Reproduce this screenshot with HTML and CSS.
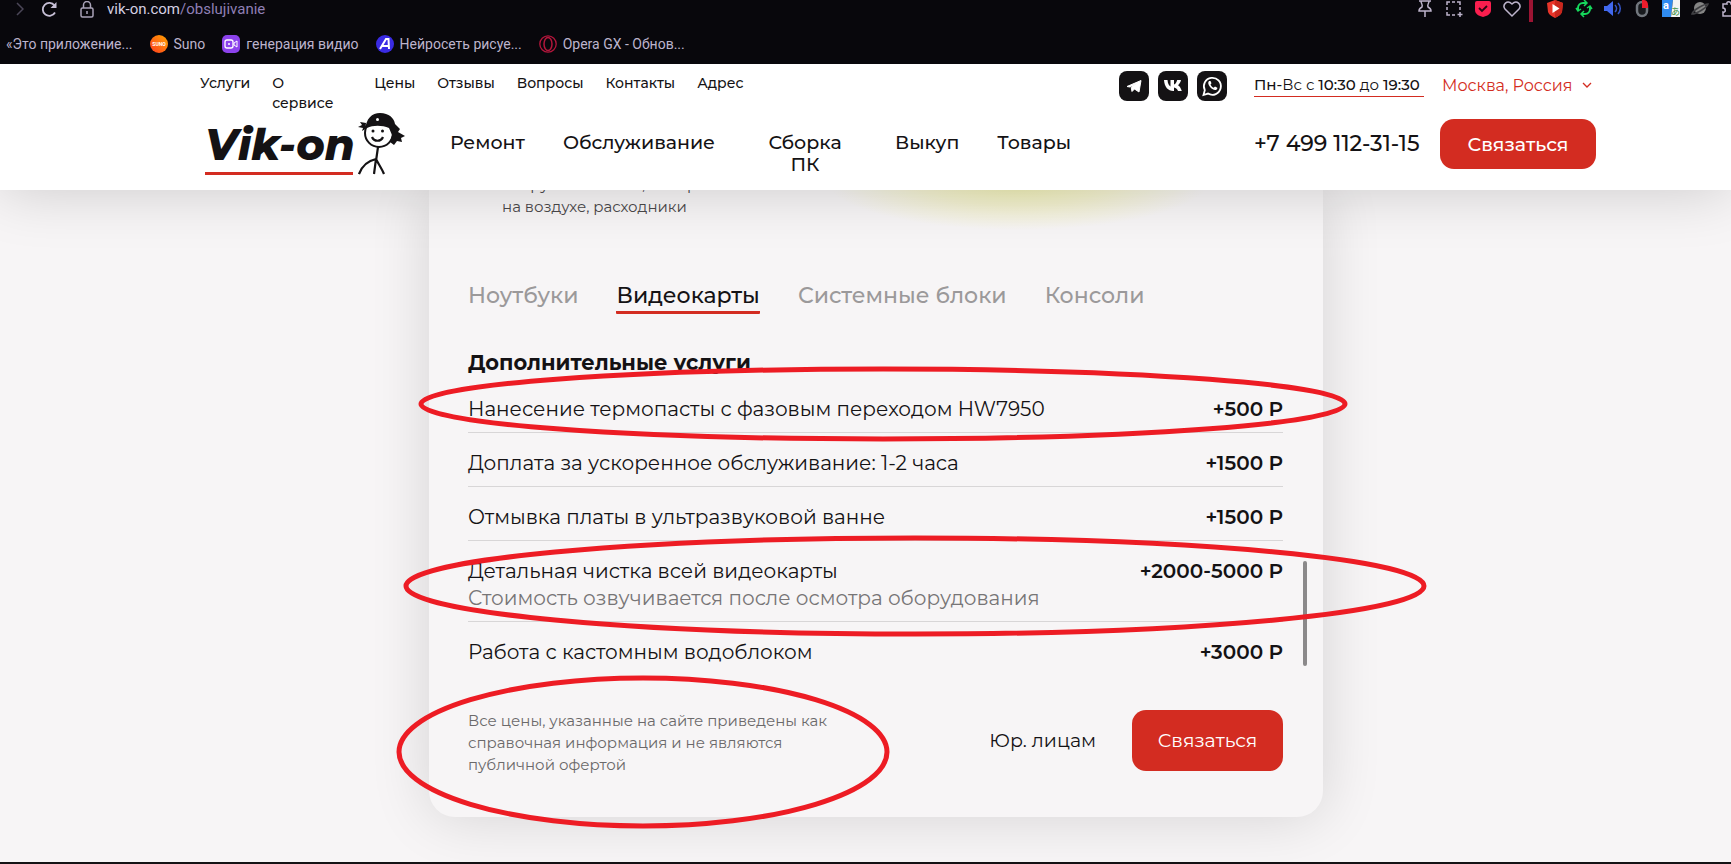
FILE: index.html
```html
<!DOCTYPE html>
<html lang="ru">
<head>
    <meta charset="UTF-8">
    <meta name="viewport" content="width=device-width, initial-scale=1.0">
    <title>Vik-on — Обслуживание</title>
    <link rel="stylesheet" href="styles.css">
</head>
<body>
    <div class="browser">
        <div class="toolbar">
            <div class="toolbar-left">
                <svg class="forward" width="8" height="14" viewBox="0 0 8 14"><path d="M1 1l6 6-6 6" fill="none" stroke="#4b4658" stroke-width="1.5"/></svg>
                <svg class="reload" width="17" height="17" viewBox="0 0 17 17"><path d="M14 11.5A6.500 6.500 0 1 1 13.500 4.500" fill="none" stroke="#c6bfd6" stroke-width="1.8"/><path d="M15.500 1v6H9.500z" fill="#c6bfd6"/></svg>
                <svg class="lock" width="14" height="17" viewBox="0 0 14 17"><path d="M3.500 7V4a3.500 3.500 0 0 1 7 0v3" fill="none" stroke="#a9a3b8" stroke-width="1.5"/><rect x="1" y="7" width="12" height="9" rx="1.500" fill="none" stroke="#a9a3b8" stroke-width="1.500"/><path d="M7 10v3" stroke="#a9a3b8" stroke-width="1.500"/></svg>
                <span class="address">vik-on.com<span class="path">/obslujivanie</span></span>
            </div>
            <div class="extensions">
                <svg width="18" height="18" viewBox="0 0 18 18" fill="none" stroke="#bdb4cc" stroke-width="1.500"><path d="M3 1h12M5 1c0 3 2 3 1 6-2 1-3 2-3 4h12c0-2-1-3-3-4-1-3 1-3 1-6M9 11v6"/></svg>
                <svg width="18" height="18" viewBox="0 0 18 18" fill="none" stroke="#bdb4cc" stroke-width="1.500"><path d="M2 5V2h3M7 2h3M12 2h3v3M15 7v3M2 7v3M2 12v3h3M7 15h3M15 12v5M12.500 14.500h5"/></svg>
                <svg width="18" height="18" viewBox="0 0 18 18"><path d="M1 3a2 2 0 0 1 2-2h12a2 2 0 0 1 2 2v7c0 4-4 6-8 7-4-1-8-3-8-7z" fill="#fa1e4e"/><path d="M5 8l3 3 5-5" fill="none" stroke="#2a0612" stroke-width="1.800"/></svg>
                <svg width="18" height="18" viewBox="0 0 18 18"><path d="M9 16L2 9C-1 5 4-1 9 4c5-5 10 1 7 5z" fill="none" stroke="#bdb4cc" stroke-width="1.500"/></svg>
                <span class="divider"></span>
                <svg width="18" height="18" viewBox="0 0 18 18"><path d="M9 0l8 3-1 9c-1 3-4 4-7 6-3-2-6-3-7-6L1 3z" fill="#e8352a"/><path d="M9 0l8 3-1 9c-1 3-4 4-7 6z" fill="#c9271d"/><path d="M6.500 4l7 4.500-7 4.500z" fill="#fff"/></svg>
                <svg width="18" height="18" viewBox="0 0 18 18" fill="none" stroke="#16d85c" stroke-width="2"><path d="M3 10V8a5 5 0 0 1 5-5h3M15 7v2a5 5 0 0 1-5 5H7"/><path d="M9 0l3 3-3 3M9 11l-3 3 3 3M1 8l2 3 3-2M17 9l-2-3-3 2" stroke-width="1.500"/></svg>
                <svg width="18" height="18" viewBox="0 0 18 18"><path d="M0 6h3l6-5v15l-6-5H0z" fill="#4168ee"/><path d="M11 5c2 2 2 5 0 7M14 3c3 3 3 8 0 11" fill="none" stroke="#3454c4" stroke-width="1.600"/></svg>
                <svg width="18" height="18" viewBox="0 0 18 18"><rect x="4" y="2" width="10" height="14" rx="5" fill="#17191d" stroke="#72777e" stroke-width="2.500"/><path d="M9 8V0h2c3 0 4 3 4 5v3z" fill="#ed1c2c"/></svg>
                <svg width="18" height="18" viewBox="0 0 18 18"><path d="M0 0h11l-2 17H0z" fill="#2f8bf0"/><path d="M11 0h7v17H9z" fill="#f4f4f4"/><text x="1" y="9" class="glyph" fill="#fff">a</text><text x="9" y="15" class="glyph-jp" fill="#2e8b37">あ</text></svg>
                <svg width="18" height="18" viewBox="0 0 18 18"><circle cx="9" cy="8" r="6" fill="#858585"/><path d="M1 14C2 10 13 4 17 4 16 8 5 14 1 14z" fill="none" stroke="#3f3f43" stroke-width="1.500"/></svg>
                <svg width="18" height="18" viewBox="0 0 18 18"><path d="M3 4h4c-1-3 4-3 4 0h5v12H3v-4c3 1 3-4 0-4z" fill="none" stroke="#bdb4cc" stroke-width="1.500"/></svg>
            </div>
        </div>
        <nav class="bookmarks">
            <a href="#">«Это приложение...</a>
            <a href="#"><svg width="18" height="18" viewBox="0 0 18 18"><defs><linearGradient id="suno" x1="0" y1="1" x2="1" y2="0"><stop offset="0" stop-color="#ff3b1f"/><stop offset="1" stop-color="#ffa400"/></linearGradient></defs><circle cx="9" cy="9" r="9" fill="url(#suno)"/><text x="9" y="11" class="suno-mark" text-anchor="middle" fill="#fff">SUNO</text></svg>Suno</a>
            <a href="#"><svg width="18" height="18" viewBox="0 0 18 18"><rect width="18" height="18" rx="5" fill="#8c42ec"/><rect x="3" y="5" width="8" height="8" rx="2" fill="none" stroke="#fff" stroke-width="1.300"/><path d="M12 8l3-2v6l-3-2z" fill="none" stroke="#fff"/><circle cx="7" cy="9" r="1" fill="#fff"/></svg>генерация видио</a>
            <a href="#"><svg width="18" height="18" viewBox="0 0 18 18"><circle cx="9" cy="9" r="9" fill="#3a2be4"/><path d="M4 14L10 4h2.500l.5 10M6.500 11H13" fill="none" stroke="#fff" stroke-width="2"/></svg>Нейросеть рисуе...</a>
            <a href="#"><svg width="18" height="18" viewBox="0 0 18 18" fill="none" stroke="#b3163c"><circle cx="9" cy="9" r="8.200" stroke-width="1.300"/><ellipse cx="9" cy="9" rx="4" ry="6.500" stroke-width="1.500"/></svg>Opera GX - Обнов...</a>
        </nav>
    </div>

    <header class="header">
        <div class="header-top">
            <nav class="top-nav">
                <a href="#">Услуги</a>
                <a href="#" class="two-lines">О сервисе</a>
                <a href="#">Цены</a>
                <a href="#">Отзывы</a>
                <a href="#">Вопросы</a>
                <a href="#">Контакты</a>
                <a href="#">Адрес</a>
            </nav>
            <div class="socials">
                <a href="#" aria-label="Telegram"><svg width="30" height="30" viewBox="0 0 30 30"><path d="M8 15.500L22 9.500 20 21l-4.500-3-2.500 2.500-.8-4 5.500-4.500-6.700 4z" fill="#fff" stroke="#fff" stroke-linejoin="round"/></svg></a>
                <a href="#" aria-label="ВКонтакте"><svg width="30" height="30" viewBox="0 0 30 30"><path d="M6 9h3.500c.3 4 1.800 6 3 6.500V9H16v4.500c1.500-.2 2.600-2.300 3.200-4.500H23c-.5 2.400-1.700 4.200-3 5.200 1.500.9 2.800 2.600 3.800 5.800H20c-.5-1.900-2-3.300-4-3.600V20h-.6C10 20 6.500 16 6 9z" fill="#fff"/></svg></a>
                <a href="#" aria-label="WhatsApp"><svg width="30" height="30" viewBox="0 0 30 30"><path d="M6.500 24l1.300-4.800A8.500 8.500 0 1 1 11 22.600z" fill="none" stroke="#fff" stroke-width="1.800"/><path d="M12 10c-3 3 3.500 10 7 9 1-.5 1.500-1.500 1.300-2.300L18 15.500l-1.300 1.300c-1.500-.6-2.600-1.700-3.200-3.200l1-1.300-1-2.300z" fill="#fff"/></svg></a>
            </div>
            <a href="#" class="hours"><b>Пн-</b>Вс с <b>10:30</b> до <b>19:30</b></a>
            <button class="city" type="button">Москва, Россия
                <svg width="10" height="6" viewBox="0 0 10 6"><path d="M1 1l4 4 4-4" fill="none" stroke="#d32c21" stroke-width="1.300"/></svg>
            </button>
        </div>
        <div class="header-main">
            <a href="#" class="logo">
                <span class="logo-text">Vik-on</span>
                <svg class="logo-man" width="48" height="62" viewBox="0 0 48 62">
                    <circle cx="21" cy="20" r="14" fill="#fff" stroke="#141214" stroke-width="2"/>
                    <path d="M7 18C8 5 14 0 22 0c9 0 14 5 15 11l5 5-2 3 7 4-4 2 1 4-5-1-3 4-4-3 2-7-3-7C24 12 15 12 9 15l-5 3 1-3-5-1 4-2-2-3 6 1z" fill="#141214"/>
                    <circle cx="19.500" cy="6.500" r="1.500" fill="#fff"/>
                    <circle cx="15" cy="18" r="1.500" fill="#141214"/><circle cx="24.500" cy="18" r="1.500" fill="#141214"/>
                    <path d="M14 24c2 5 9 5 11 0M20 34l-2 14M18 46C9 48 4 53 1 61M18 46l-2 15M18 46c3 6 6 10 8 15" fill="none" stroke="#141214" stroke-width="2.200"/>
                </svg>
            </a>
            <nav class="main-nav">
                <a href="#">Ремонт</a>
                <a href="#">Обслуживание</a>
                <a href="#" class="two-lines">Сборка ПК</a>
                <a href="#">Выкуп</a>
                <a href="#">Товары</a>
            </nav>
            <a href="tel:+74991123115" class="phone">+7 499 112-31-15</a>
            <button class="btn btn-header" type="button">Связаться</button>
        </div>
    </header>

    <main class="page">
        <section class="card">
            <div class="intro">
                <p>Нагрузочный тест, замер<br>на воздухе, расходники</p>
            </div>
            <div class="tabs" role="tablist">
                <button type="button" role="tab">Ноутбуки</button>
                <button type="button" role="tab" aria-selected="true" class="active">Видеокарты</button>
                <button type="button" role="tab">Системные блоки</button>
                <button type="button" role="tab">Консоли</button>
            </div>
            <h2>Дополнительные услуги</h2>
            <div class="price-list">
                <table>
                    <tr><td>Нанесение термопасты с фазовым переходом HW7950</td><td class="price">+500 Р</td></tr>
                    <tr><td>Доплата за ускоренное обслуживание: 1-2 часа</td><td class="price">+1500 Р</td></tr>
                    <tr><td>Отмывка платы в ультразвуковой ванне</td><td class="price">+1500 Р</td></tr>
                    <tr><td>Детальная чистка всей видеокарты<span class="note">Стоимость озвучивается после осмотра оборудования</span></td><td class="price">+2000-5000 Р</td></tr>
                    <tr><td>Работа с кастомным водоблоком</td><td class="price">+3000 Р</td></tr>
                </table>
                <span class="scroll-thumb"></span>
            </div>
            <div class="card-footer">
                <p class="disclaimer">Все цены, указанные на сайте приведены как справочная информация и не являются публичной офертой</p>
                <a href="#" class="legal">Юр. лицам</a>
                <button class="btn btn-card" type="button">Связаться</button>
            </div>
        </section>
    </main>

    <!-- hand-drawn marks over the price list -->
    <svg class="marks" width="1731" height="864" viewBox="0 0 1731 864" fill="none" stroke="#ed1c24" stroke-width="5" aria-hidden="true">
        <ellipse cx="883" cy="404" rx="462" ry="35"/>
        <ellipse cx="915" cy="586" rx="509" ry="48"/>
        <ellipse cx="643" cy="752" rx="244" ry="74"/>
    </svg>
</body>
</html>
```
FILE: styles.css
```css
* {
    box-sizing: border-box;
}
body {
    margin: 0;
    min-height: 100vh;
    display: flex;
    flex-direction: column;
    background-color: #f7f5f6;
    color: #141214;
    font-family: Montserrat, Inter, sans-serif;
    overflow: hidden;
}
a {
    color: inherit;
    text-decoration: none;
}
button {
    border: none;
    padding: 0;
    background: none;
    font-family: inherit;
    cursor: pointer;
}
svg {
    flex: none;
}

/* browser bar */
.browser {
    position: relative;
    z-index: 2;
    height: 64px;
    background-color: #08070c;
    color: #bdb4cc;
    font-family: Roboto, sans-serif;
    font-size: 14px;
}
.toolbar {
    display: flex;
    justify-content: space-between;
    height: 18px;
}
.toolbar-left {
    display: flex;
    align-items: center;
    padding-left: 16px;
}
.reload {
    margin-left: 17px;
}
.lock {
    margin-left: 22px;
}
.address {
    margin-left: 13px;
    font-size: 15px;
    color: #d5cfe2;
}
.path {
    color: #8f7fb5;
}
.extensions {
    display: flex;
    gap: 11px;
    margin-right: -7px;
}
.divider {
    width: 4px;
    height: 22px;
    margin: 0 2px 0 -3px;
    background-color: #9c1433;
}
.glyph {
    font: bold 11px Roboto, sans-serif;
}
.glyph-jp {
    font: 9px "Noto Sans CJK JP", sans-serif;
}
.suno-mark {
    font: bold 5px Roboto, sans-serif;
}
.bookmarks {
    display: flex;
    align-items: center;
    gap: 17px;
    height: 52px;
    padding-left: 6px;
}
.bookmarks a {
    display: flex;
    align-items: center;
    gap: 6px;
}

/* header */
.header {
    position: relative;
    z-index: 1;
    height: 126px;
    padding: 7px 135px 0 200px;
    background-color: #fff;
    box-shadow: 0 0 60px rgba(0, 0, 0, 0.18);
}
.header-top {
    display: flex;
    height: 42px;
}
.top-nav {
    display: flex;
    gap: 22px;
    margin-right: auto;
    padding-top: 2px;
    font-size: 14px;
    font-weight: 500;
    line-height: 20px;
}
.top-nav .two-lines {
    width: 80px;
    padding-right: 12px;
}
.socials {
    display: flex;
    gap: 9px;
}
.socials a {
    width: 30px;
    height: 30px;
    border-radius: 8px;
    background-color: #141214;
}
.hours {
    width: 170px;
    height: 26px;
    margin-left: 27px;
    padding-top: 4px;
    border-bottom: 1px solid #d32c21;
    font-size: 15px;
    line-height: 20px;
    white-space: nowrap;
}
.hours b {
    font-weight: 500;
}
.city {
    display: flex;
    align-items: center;
    justify-content: space-between;
    width: 154px;
    height: 20px;
    margin: 4px 0 0 18px;
    padding-right: 4px;
    color: #d32c21;
    font-size: 16px;
}
.header-main {
    display: flex;
    align-items: flex-start;
    height: 64px;
}
.logo {
    display: flex;
    padding-left: 5px;
}
.logo-text {
    width: 148px;
    height: 62px;
    border-bottom: 3px solid #d32c21;
    font-size: 43px;
    font-weight: 800;
    font-style: italic;
    line-height: 64px;
    white-space: nowrap;
}
.logo-man {
    margin-left: 5px;
}
.main-nav {
    display: flex;
    gap: 38px;
    margin: 19px auto 0 44px;
    font-size: 19px;
    font-weight: 500;
    line-height: 22px;
    text-align: center;
}
.main-nav .two-lines {
    width: 104px;
    padding: 0 12px;
}
.phone {
    width: 168px;
    margin-top: 19px;
    font-size: 22px;
    font-weight: 500;
    line-height: 24px;
    white-space: nowrap;
}
.btn {
    border-radius: 14px;
    background-color: #d32c21;
    color: #fff;
    font-size: 19px;
}
.btn-header {
    width: 156px;
    height: 50px;
    margin: 6px 0 0 18px;
    font-weight: 500;
}

/* card */
.page {
    flex: 1;
    padding: 0 0 44px 21px;
    border-bottom: 2px solid #141214;
}
.card {
    display: flow-root;
    max-width: 894px;
    margin: 0 auto;
    padding: 0 40px 41px 39px;
    border-radius: 0 0 26px 26px;
    background-color: #f7f5f6;
    box-shadow: 0 0 60px rgba(0, 0, 0, 0.14);
}
.intro {
    display: flow-root;
    height: 91px;
    padding-left: 34px;
    background: radial-gradient(190px 48px at 550px -8px, #eeeeb0, #f3f1cf 50%, rgba(247, 245, 246, 0));
    color: #4a484a;
    font-size: 15px;
    line-height: 22px;
}
.intro p {
    margin: -16px 0 0;
}
.tabs {
    display: flex;
    gap: 38px;
    height: 33px;
}
.tabs button {
    border-bottom: 3px solid transparent;
    border-radius: 1px;
    color: #9b999a;
    font-size: 22px;
    font-weight: 500;
    line-height: 30px;
}
.tabs .active {
    border-color: #d32c21;
    color: #141214;
}
h2 {
    margin: 35px 0 12px;
    font-size: 21px;
    font-weight: 700;
    line-height: 28px;
}
.price-list {
    position: relative;
}
table {
    width: 100%;
    border-collapse: collapse;
    font-size: 20px;
    line-height: 27px;
}
td {
    padding: 17px 0 9px;
    border-bottom: 1px solid #d8d6d7;
    vertical-align: top;
}
tr:first-child td {
    padding-top: 7px;
}
tr:last-child td {
    border-bottom: none;
    padding-bottom: 0;
}
.note {
    display: block;
    color: #777576;
}
.price {
    font-weight: 600;
    text-align: right;
    white-space: nowrap;
}
.scroll-thumb {
    position: absolute;
    right: -24px;
    bottom: 0;
    width: 4px;
    height: 105px;
    border-radius: 2px;
    background-color: #8b898a;
}
.card-footer {
    display: flex;
    align-items: flex-start;
    margin-top: 44px;
}
.disclaimer {
    width: 380px;
    margin: 0 auto 0 0;
    color: #6b696a;
    font-size: 15px;
    line-height: 22px;
}
.legal {
    font-size: 19px;
    line-height: 61px;
}
.btn-card {
    width: 151px;
    height: 61px;
    margin-left: 36px;
}

.marks {
    position: absolute;
    top: 0;
    left: 0;
    z-index: 3;
    pointer-events: none;
}
```
